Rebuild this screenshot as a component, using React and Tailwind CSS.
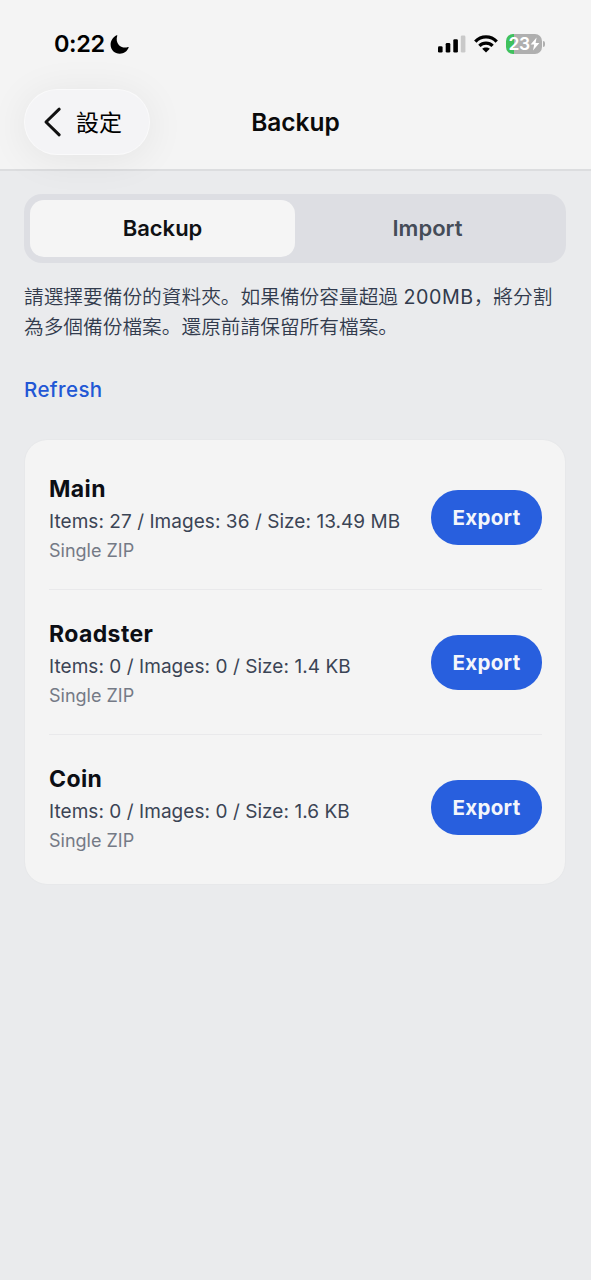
import { useState } from "react";
import clsx from "clsx";

const folders = [
  { name: "Main", items: 27, images: 36, size: "13.49 MB" },
  { name: "Roadster", items: 0, images: 0, size: "1.4 KB" },
  { name: "Coin", items: 0, images: 0, size: "1.6 KB" },
];

const StatusBar = () => (
  <div className="flex h-[88px] items-center justify-between pl-[54px] pr-[46px]">
    <div className="flex items-center gap-[5px]">
      <span className="text-[23.5px] leading-none font-semibold tracking-[-0.4px] text-black">0:22</span>
      <svg width="19" height="19" viewBox="0 0 19 19">
        <path
          d="M7.3 0.6C6.1 4.1 6.6 7.8 9 10.2C11.4 12.5 15.1 13.2 18 12C18.5 11.8 18.9 12.1 18.7 12.6C17.2 16.4 13.8 18.8 9.8 18.8C4.6 18.8 0.6 14.9 0.6 9.8C0.6 5.7 2.9 2.2 6.6 0.3C7.1 0 7.5 0.1 7.3 0.6Z"
          fill="#000"
        />
      </svg>
    </div>
    <div className="flex items-center">
      <svg width="28" height="18" viewBox="0 0 28 18">
        <rect x="0" y="11.3" width="4.6" height="6.2" rx="1.3" fill="#000" />
        <rect x="7.7" y="8" width="4.6" height="9.5" rx="1.3" fill="#000" />
        <rect x="15.3" y="4.3" width="4.6" height="13.2" rx="1.3" fill="#000" />
        <rect x="22.8" y="0.4" width="4.6" height="17.1" rx="1.3" fill="#c9c9c9" />
      </svg>
      <svg className="ml-[8px]" width="24" height="18" viewBox="0 0 24 18">
        <g fill="none" stroke="#000" strokeWidth="3.3">
          <path d="M1.3 6.6C7.2 0.4 16.8 0.4 22.7 6.6" />
          <path d="M5.4 10.9C9.1 7.2 14.9 7.2 18.6 10.9" />
        </g>
        <path d="M12 17.6L8.2 13.8C10.2 11.9 13.8 11.9 15.8 13.8Z" fill="#000" />
      </svg>
      <div className="ml-[8px] flex h-[20px] w-[36px] items-center justify-center rounded-[7px] bg-[linear-gradient(to_right,#3fc15d_0_8px,#afafaf_8px)] pl-[1px]">
        <span className="text-[17.5px] leading-none font-semibold tracking-[-0.6px] text-white">23</span>
        <svg className="ml-[1px]" width="10" height="14" viewBox="0 0 10 14">
          <path d="M6.6 0.4L0.6 7.6H4.2L3 13.4L9.4 5.9H5.6Z" fill="#fff" />
        </svg>
      </div>
      <div className="ml-[1px] h-[6px] w-[2px] rounded-r-full bg-[#afafaf]" />
    </div>
  </div>
);

const Header = () => (
  <header className="h-[171px] border-b-2 border-[#dcdddf] bg-[#f4f4f4]">
    <StatusBar />
    <div className="grid h-[68px] grid-cols-[1fr_auto_1fr] items-center px-6">
      <button className="flex h-[66px] w-[126px] items-center rounded-full border border-white/50 bg-[#f4f4f6] pl-[18px] shadow-[0_4px_40px_rgba(0,0,0,0.07)]">
        <svg width="20" height="30" viewBox="0 0 20 30">
          <path
            d="M16.2 2.2L3 15L16.2 27.8"
            fill="none"
            stroke="#111"
            strokeWidth="3"
            strokeLinecap="round"
            strokeLinejoin="round"
          />
        </svg>
        <span className="ml-[13px] pt-[2px] text-[23px] leading-none text-black">設定</span>
      </button>
      <h1 className="text-[24.5px] leading-none font-semibold text-[#0a0a0a]">Backup</h1>
    </div>
  </header>
);

const Tab = ({ label, active, onClick }) => (
  <button
    onClick={onClick}
    className={clsx(
      "flex-1 rounded-[14px] text-[22px] font-semibold",
      active ? "bg-[#f5f5f5] text-[#101114]" : "text-[#454c58]"
    )}
  >
    {label}
  </button>
);

const FolderRow = ({ name, items, images, size }) => (
  <li className="flex h-[145px] items-center justify-between border-b border-[#e9e9eb] last:border-b-0 last:h-[144px]">
    <div className="pt-[2px] whitespace-nowrap">
      <h2 className="text-[23px] leading-[34px] font-bold tracking-[0.4px] text-[#0c0e14]">{name}</h2>
      <p className="mt-px text-[19px] leading-[30px] tracking-[0.05px] text-[#3b4455]">
        Items: {items} / Images: {images} / Size: {size}
      </p>
      <p className="text-[18px] leading-[27px] text-[#747a86]">Single ZIP</p>
    </div>
    <button className="h-[55px] w-[111px] rounded-[27px] bg-[#285fde] pt-[2px] text-[20.5px] font-bold tracking-[0.3px] text-[#f4f6fb]">
      Export
    </button>
  </li>
);

export default function App() {
  const [tab, setTab] = useState("Backup");

  return (
    <div className="min-h-screen bg-[#eaebed] font-['Inter','Noto_Sans_CJK_SC',sans-serif]">
      <Header />
      <main className="pt-[23px] pr-[25px] pl-6">
        <div className="flex h-[69px] rounded-[18px] bg-[#dddee3] p-[6px]">
          <Tab label="Backup" active={tab === "Backup"} onClick={() => setTab("Backup")} />
          <Tab label="Import" active={tab === "Import"} onClick={() => setTab("Import")} />
        </div>
        <p className="mt-[19px] text-[19.7px] leading-[30px] font-[350] whitespace-nowrap text-[#323b4d]">
          請選擇要備份的資料夾。如果備份容量超過 <span className="font-normal tracking-[0.5px]">200MB</span>
          {"\uff0c"}將分割
          <br />
          為多個備份檔案。還原前請保留所有檔案。
        </p>
        <button className="mt-[32px] block text-[20.5px] leading-[32px] font-medium tracking-[0.4px] text-[#2257d5]">
          Refresh
        </button>
        <ul className="mt-[34px] mr-px ml-px h-[444px] rounded-[22px] bg-[#f4f4f4] pr-[23px] pl-[24px] pt-[5px] shadow-[0_0_2px_rgba(0,0,0,0.05)]">
          {folders.map((folder) => (
            <FolderRow key={folder.name} {...folder} />
          ))}
        </ul>
      </main>
    </div>
  );
}
